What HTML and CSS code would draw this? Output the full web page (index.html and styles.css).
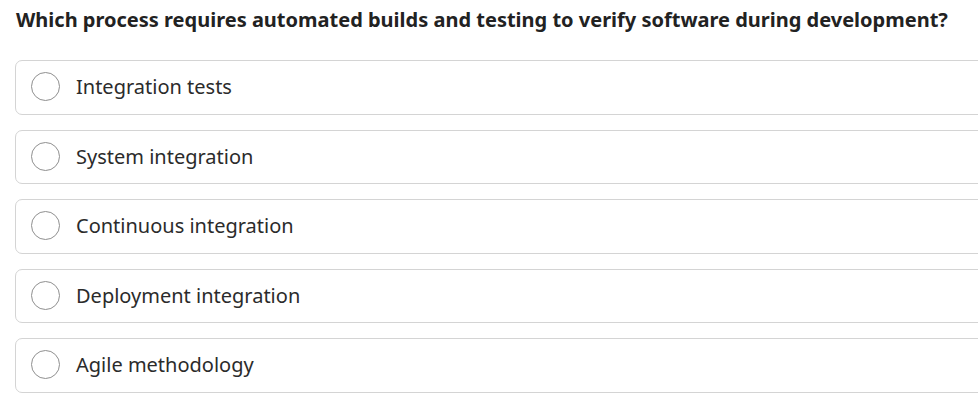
FILE: index.html
```html
<!DOCTYPE html>
<html>
<head>
<meta charset="utf-8">
<link rel="stylesheet" href="styles.css">
</head>
<body>
<div class="quiz">
  <h1 class="question">Which process requires automated builds and testing to verify software during development?</h1>
  <div class="options">
    <label class="option"><span class="radio"></span><span class="label">Integration tests</span></label>
    <label class="option"><span class="radio"></span><span class="label">System integration</span></label>
    <label class="option"><span class="radio"></span><span class="label">Continuous integration</span></label>
    <label class="option"><span class="radio"></span><span class="label">Deployment integration</span></label>
    <label class="option"><span class="radio"></span><span class="label">Agile methodology</span></label>
  </div>
</div>
</body>
</html>
```

FILE: styles.css
```css
html, body {
  margin: 0;
  padding: 0;
  background: #ffffff;
  overflow: hidden;
}
body {
  font-family: "Noto Sans", "Open Sans", sans-serif;
  color: #2b2b2b;
}
.quiz {
  padding: 5px 0 0 15px;
}
.question {
  margin: 0 0 0 1px;
  font-size: 20px;
  font-weight: 700;
  line-height: 30px;
  color: #222222;
}
.options {
  margin-top: 25px;
  display: flex;
  flex-direction: column;
  gap: 15px;
}
.option {
  display: flex;
  align-items: center;
  box-sizing: border-box;
  height: 54.5px;
  width: calc(100% + 20px);
  border: 1px solid #d4d4d4;
  border-radius: 7px;
  padding-left: 15px;
  padding-bottom: 1px;
}
.radio {
  width: 27px;
  height: 27px;
  border: 1px solid #8f8f8f;
  border-radius: 50%;
  flex: none;
}
.label {
  margin-left: 16px;
  font-size: 20px;
  color: #2b2b2b;
}
```
